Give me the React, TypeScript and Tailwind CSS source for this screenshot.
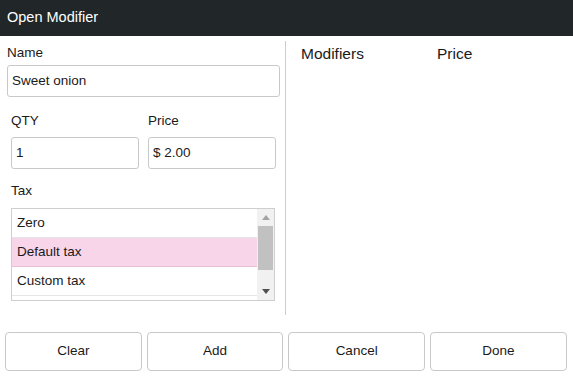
const Field = ({ value, className }: { value: string; className: string }) => (
  <div
    className={`flex h-[32px] items-center rounded-[3px] border border-[#c9c9c9] pl-[4px] text-[13.5px] text-[#1a1a1a] ${className}`}
  >
    {value}
  </div>
)

const Label = ({ children, className }: { children: string; className: string }) => (
  <div className={`h-[16px] text-[13.5px] leading-[16px] text-[#1a1a1a] ${className}`}>{children}</div>
)

const taxes = ['Zero', 'Default tax', 'Custom tax', '']

const TaxList = () => (
  <div className="ml-[11px] mt-[9px] flex h-[93px] w-[264px] overflow-hidden border border-[#cfcfcf] bg-white">
    <div className="flex-1 overflow-hidden">
      {taxes.map((t, i) => (
        <div
          key={i}
          className={
            i === 1
              ? 'flex h-[29px] items-center border-b border-[#e6bfd4] bg-[#f8d5e9] pl-[5px] text-[13.5px] text-[#1a1a1a]'
              : 'flex h-[29px] items-center border-b border-[#e6e6e6] pl-[5px] text-[13.5px] text-[#1a1a1a]'
          }
        >
          {t}
        </div>
      ))}
    </div>
    <div className="flex w-[17px] flex-col bg-[#f1f1f1]">
      <div className="flex h-[17px] items-center justify-center">
        <svg width="8" height="5" viewBox="0 0 8 5">
          <path d="M4 0L8 5H0z" fill="#a3a3a3" />
        </svg>
      </div>
      <div className="mx-[1px] h-[44px] bg-[#c1c1c1]" />
      <div className="flex-1" />
      <div className="flex h-[17px] items-center justify-center">
        <svg width="8" height="5" viewBox="0 0 8 5">
          <path d="M0 0H8L4 5z" fill="#505050" />
        </svg>
      </div>
    </div>
  </div>
)

const Button = ({ children }: { children: string }) => (
  <button className="flex h-[39px] w-[136.67px] items-center justify-center rounded-[4px] border border-[#c9c9c9] bg-white text-[13.5px] text-[#1a1a1a]">
    {children}
  </button>
)

export default function App() {
  return (
    <div className="h-[380px] w-[573px] overflow-hidden bg-white font-['Liberation_Sans',Arial,sans-serif]">
      <div className="flex h-[36px] items-center bg-[#212729] pl-[7px] text-[14.5px] text-white">Open Modifier</div>

      <div className="mt-[5px] flex h-[274px]">
        <div className="flex w-[286px] flex-col border-r border-[#cccccc]">
          <Label className="ml-[7px] mt-[4px]">Name</Label>
          <Field value="Sweet onion" className="ml-[7px] mt-[4px] w-[273px]" />

          <div className="ml-[11px] mt-[16px] flex gap-[9px]">
            <div className="flex w-[128px] flex-col">
              <Label className="">QTY</Label>
              <Field value="1" className="mt-[8px] w-[128px]" />
            </div>
            <div className="flex w-[128px] flex-col">
              <Label className="">Price</Label>
              <Field value="$ 2.00" className="mt-[8px] w-[128px]" />
            </div>
          </div>

          <Label className="ml-[11px] mt-[14px]">Tax</Label>
          <TaxList />
        </div>

        <div className="flex pl-[15px] pt-[5px] text-[15.5px] leading-[16px] text-[#1a1a1a]">
          <div className="w-[136px]">Modifiers</div>
          <div>Price</div>
        </div>
      </div>

      <div className="mt-[17px] flex gap-[5px] pl-[5px]">
        <Button>Clear</Button>
        <Button>Add</Button>
        <Button>Cancel</Button>
        <Button>Done</Button>
      </div>
    </div>
  )
}
